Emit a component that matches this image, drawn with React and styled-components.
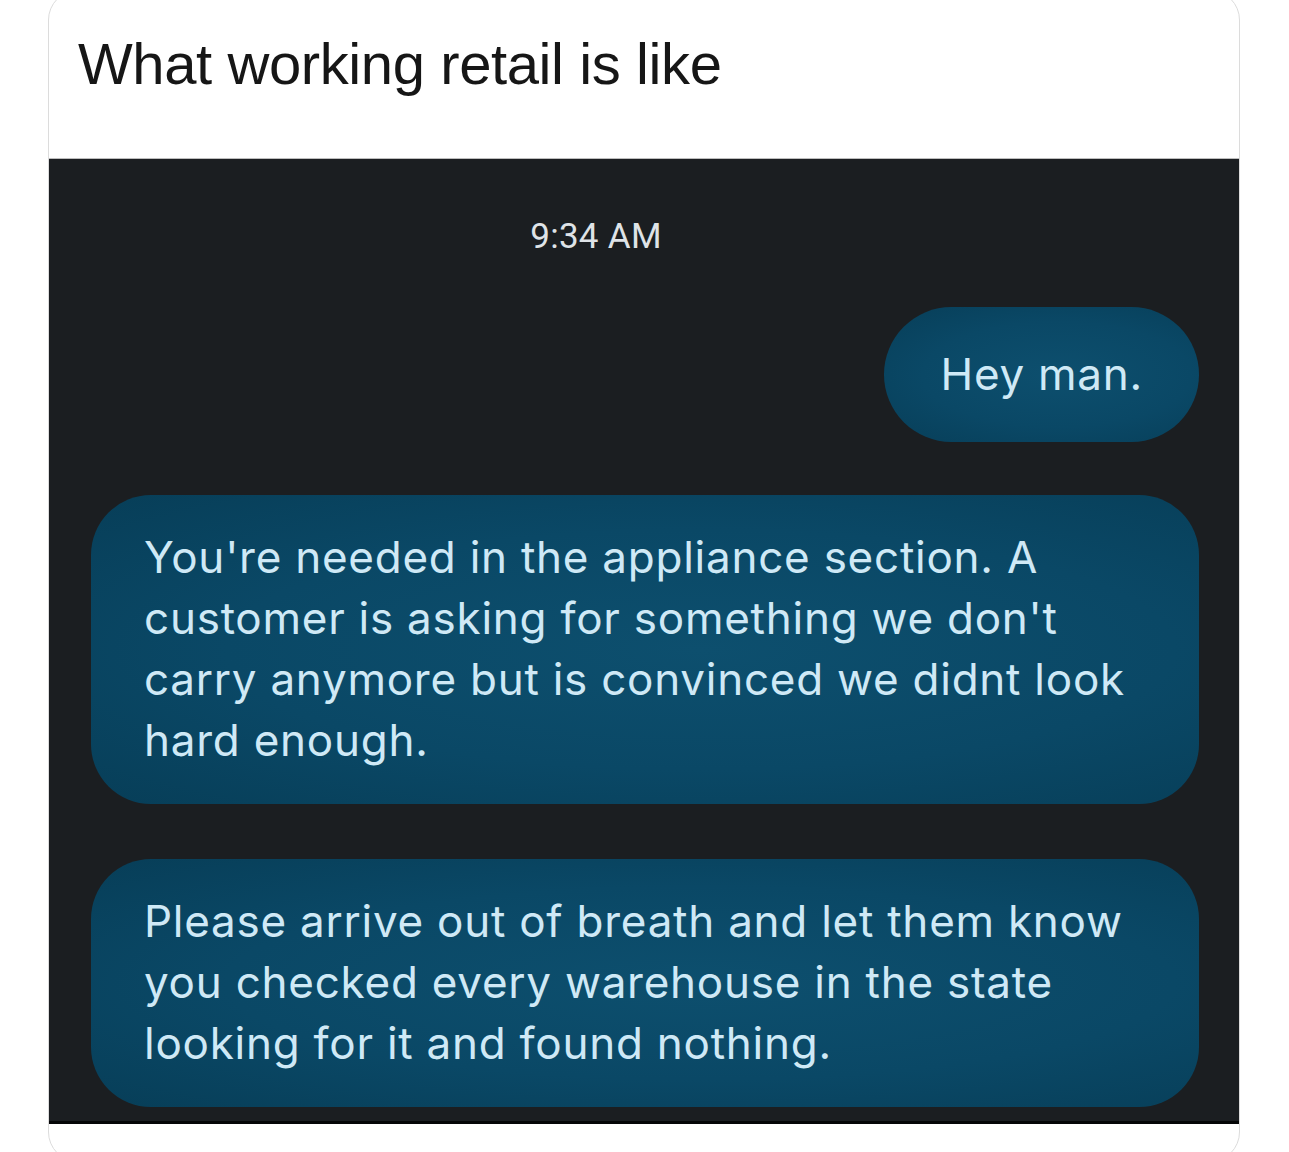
import React from 'react';
import styled, { createGlobalStyle } from 'styled-components';

const GlobalStyle = createGlobalStyle`
  html, body {
    margin: 0;
    padding: 0;
    background: #ffffff;
  }
  body {
    width: 1289px;
    height: 1152px;
    overflow: hidden;
  }
`;

const Card = styled.div`
  margin: -10px 0 0 48px;
  width: 1192px;
  height: 1172px;
  border: 1px solid #dcdcdc;
  border-radius: 30px;
  box-sizing: border-box;
  background: #ffffff;
  overflow: hidden;
  display: flex;
  flex-direction: column;
`;

const Header = styled.div`
  height: 168px;
  box-sizing: border-box;
  padding: 40px 0 0 29px;
  border-bottom: 1px solid #bdbdbd;
`;

const Title = styled.h1`
  margin: 0;
  font-family: "Liberation Sans", Arial, sans-serif;
  font-weight: 400;
  font-size: 58px;
  line-height: 66px;
  color: #161616;
  letter-spacing: -0.4px;
`;

const Chat = styled.div`
  height: 965px;
  box-sizing: border-box;
  background: #1b1e21;
  border-bottom: 3px solid #050607;
  padding: 52px 40px 0 42px;
  display: flex;
  flex-direction: column;
  font-family: Inter, Roboto, "Noto Sans", sans-serif;
`;

const Stamp = styled.div`
  align-self: center;
  margin-left: -98px;
  font-family: Roboto, "Noto Sans", sans-serif;
  font-size: 35px;
  line-height: 52px;
  color: #dfe3e7;
  letter-spacing: 0.3px;
`;

const Bubble = styled.div`
  align-self: ${({ $mine }) => ($mine ? 'flex-end' : 'stretch')};
  margin-top: ${({ $gap }) => $gap}px;
  padding: ${({ $mine }) => ($mine ? '37px 56px 37px 56px' : '32px 53px 33px 53px')};
  border-radius: ${({ $mine }) => ($mine ? '68px' : '60px')};
  background: radial-gradient(ellipse at 55% 50%, #0d4f6e 0%, #0a4866 55%, #073e58 100%);
  color: #cfe9f6;
  font-size: 44px;
  line-height: 61px;
  letter-spacing: 0.75px;
  white-space: nowrap;
`;

const Line = styled.span`
  display: block;
`;

const messages = [
  {
    gap: 53,
    lines: [
      "You're needed in the appliance section. A",
      "customer is asking for something we don't",
      'carry anymore but is convinced we didnt look',
      'hard enough.',
    ],
  },
  {
    gap: 55,
    lines: [
      'Please arrive out of breath and let them know',
      'you checked every warehouse in the state',
      'looking for it and found nothing.',
    ],
  },
];

export default function App() {
  return (
    <>
      <GlobalStyle />
      <Card>
        <Header>
          <Title>What working retail is like</Title>
        </Header>
        <Chat>
          <Stamp>9:34 AM</Stamp>
          <Bubble $mine $gap={44}>
            <Line>Hey man.</Line>
          </Bubble>
          {messages.map((m, i) => (
            <Bubble key={i} $gap={m.gap}>
              {m.lines.map((l) => (
                <Line key={l}>{l}</Line>
              ))}
            </Bubble>
          ))}
        </Chat>
      </Card>
    </>
  );
}
